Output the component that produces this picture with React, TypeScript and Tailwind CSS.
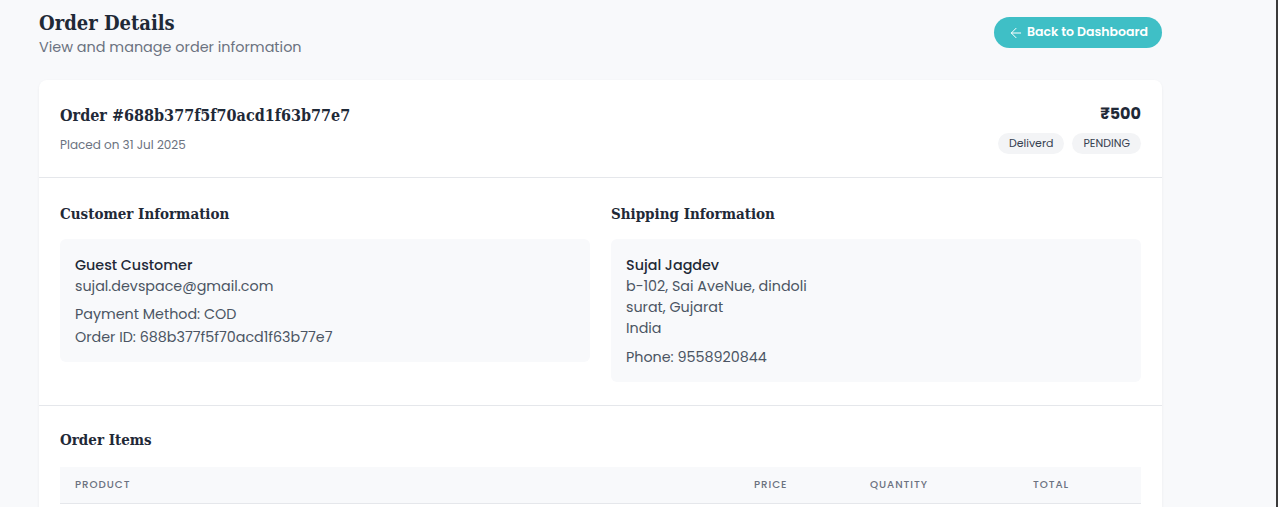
import { ArrowLeft } from "lucide-react";

const sans = "font-['Poppins','DejaVu_Sans',sans-serif]";
const slab = "font-['DejaVu_Serif_Condensed','DejaVu_Serif',serif] [font-stretch:condensed]";

export default function App(): React.JSX.Element {
  return (
    <div className={`min-h-[507px] bg-[#f8f9fb] border-r-2 border-[#3b3b3b] ${sans}`}>
      <div className="ml-[39px] w-[1123px] pt-[9px]">
        {/* page header */}
        <div className="flex items-start justify-between">
          <div>
            <h1 className={`${slab} text-[20px] font-bold leading-[28px] text-[#1f2937]`}>Order Details</h1>
            <p className="text-[14.4px] leading-[20px] text-[#6b7280]">View and manage order information</p>
          </div>
          <button className="mt-[8px] flex h-[31px] w-[168px] items-center justify-center gap-[3px] rounded-full bg-[#3fbfc6] text-[12.5px] font-semibold text-white">
            <ArrowLeft size={16} strokeWidth={1.5} />
            Back to Dashboard
          </button>
        </div>

        {/* card */}
        <div className="mt-[23px] rounded-lg bg-white shadow-[0_1px_3px_rgba(0,0,0,0.06)]">
          <div className="flex items-start justify-between border-b border-[#e5e7eb] px-[21px] pb-[23px] pt-[23px]">
            <div>
              <h2 className={`${slab} text-[16px] font-bold leading-[26px] text-[#1f2937]`}>Order #688b377f5f70acd1f63b77e7</h2>
              <p className="mt-[7px] text-[12px] leading-[18px] text-[#6b7280]">Placed on 31 Jul 2025</p>
            </div>
            <div className="-mt-[1px] flex flex-col items-end">
              <span className="text-[16px] font-bold leading-[24px] text-[#1f2937]">₹500</span>
              <div className="mt-[7px] flex gap-[8px]">
                <span className="rounded-full bg-[#f3f4f6] px-[11px] py-[3px] text-[11px] leading-[15px] text-[#374151]">Deliverd</span>
                <span className="rounded-full bg-[#f3f4f6] px-[11px] py-[3px] text-[11px] leading-[15px] text-[#374151]">PENDING</span>
              </div>
            </div>
          </div>

          <div className="grid grid-cols-2 gap-[21px] border-b border-[#e5e7eb] px-[21px] pb-[23px] pt-[24px]">
            <div>
              <h3 className={`${slab} text-[15px] font-semibold leading-[24px] text-[#1f2937]`}>Customer Information</h3>
              <div className="mt-[13px] rounded-md bg-[#f8f9fb] px-[15px] pb-[14px] pt-[16px] text-[14.3px] leading-[21px] text-[#4b5563]">
                <p className="font-medium text-[#1f2937]">Guest Customer</p>
                <p>sujal.devspace@gmail.com</p>
                <p className="mt-[7px]">Payment Method: COD</p>
                <p className="mt-[2px]">Order ID: 688b377f5f70acd1f63b77e7</p>
              </div>
            </div>
            <div>
              <h3 className={`${slab} text-[15px] font-semibold leading-[24px] text-[#1f2937]`}>Shipping Information</h3>
              <div className="mt-[13px] rounded-md bg-[#f8f9fb] px-[15px] pb-[14px] pt-[16px] text-[14.3px] leading-[21px] text-[#4b5563]">
                <p className="font-medium text-[#1f2937]">Sujal Jagdev</p>
                <p>b-102, Sai AveNue, dindoli</p>
                <p>surat, Gujarat</p>
                <p>India</p>
                <p className="mt-[8px]">Phone: 9558920844</p>
              </div>
            </div>
          </div>

          <div className="px-[21px] pt-[22px]">
            <h3 className={`${slab} text-[15px] font-semibold leading-[24px] text-[#1f2937]`}>Order Items</h3>
            <div className="mt-[15px] grid h-[37px] grid-cols-[679px_116px_163px_1fr] items-center border-b border-[#e5e7eb] bg-[#f8f9fb] px-[15px] text-[10.3px] font-medium uppercase tracking-[0.09em] text-[#6b7280]">
              <span>Product</span>
              <span>Price</span>
              <span>Quantity</span>
              <span>Total</span>
            </div>
            <div className="h-[20px]" />
          </div>
        </div>
      </div>
    </div>
  );
}
